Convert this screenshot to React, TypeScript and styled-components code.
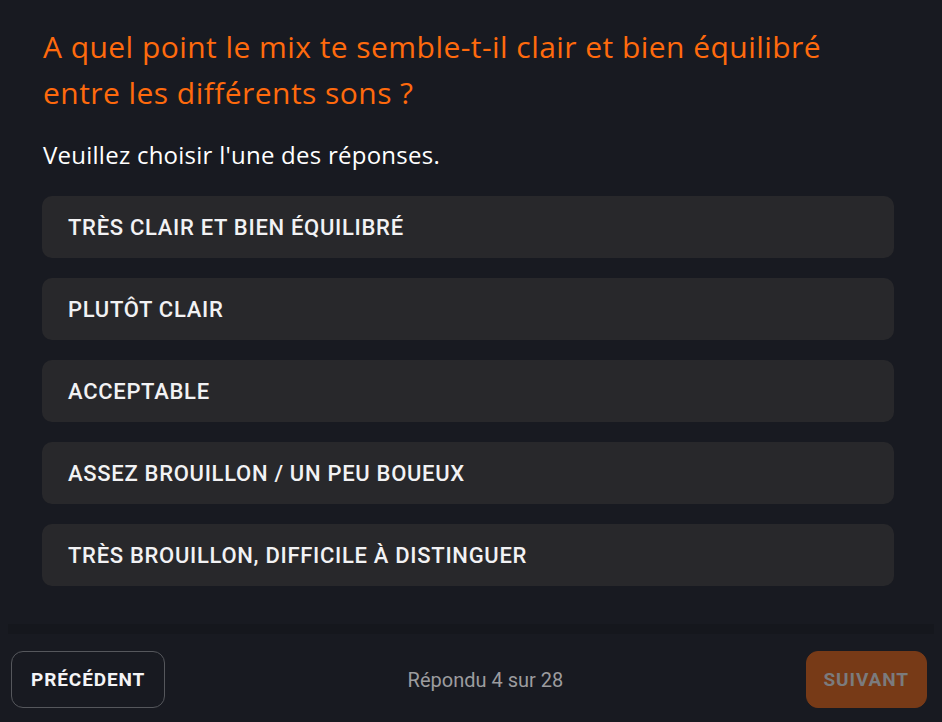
import React from 'react';
import styled, { createGlobalStyle } from 'styled-components';

const GlobalStyle = createGlobalStyle`
  html, body {
    margin: 0;
    padding: 0;
    background: #181a21;
  }
  * {
    box-sizing: border-box;
  }
`;

const Page = styled.div`
  width: 942px;
  height: 722px;
  background: #181a21;
  display: flex;
  flex-direction: column;
`;

const Main = styled.main`
  padding: 24px 48px 0 42px;
  display: flex;
  flex-direction: column;
`;

const Question = styled.h1`
  margin: 0 0 0 1px;
  color: #ff6a0d;
  font-family: 'Open Sans', 'Noto Sans', sans-serif;
  font-weight: 400;
  font-size: 30px;
  letter-spacing: 0.45px;
  line-height: 46px;
`;

const Hint = styled.p`
  margin: 24px 0 26px 1px;
  color: #ffffff;
  font-family: 'Open Sans', 'Noto Sans', sans-serif;
  font-size: 24px;
  letter-spacing: 0.25px;
  line-height: 30px;
`;

const Options = styled.div`
  display: flex;
  flex-direction: column;
  gap: 20px;
`;

const Option = styled.button`
  height: 62px;
  width: 100%;
  border: none;
  border-radius: 10px;
  background: #28282b;
  color: #f2f2f4;
  text-align: left;
  padding: 0 26px;
  font-family: 'Roboto', 'Liberation Sans', sans-serif;
  font-weight: 500;
  font-size: 22px;
  letter-spacing: 0.7px;
  text-transform: uppercase;
  cursor: pointer;
`;

const Divider = styled.div`
  margin: 38px 8px 0 8px;
  height: 10px;
  background: #15171d;
`;

const Footer = styled.footer`
  display: flex;
  align-items: center;
  justify-content: space-between;
  padding: 17px 15px 0 11px;
`;

const NavButton = styled.button<{ $primary?: boolean }>`
  height: 57px;
  padding: 0 ${(p) => (p.$primary ? '17px' : '19px')};
  border-radius: 12px;
  border: 1px solid ${(p) => (p.$primary ? '#773a17' : '#55575c')};
  background: ${(p) => (p.$primary ? '#773a17' : 'transparent')};
  color: ${(p) => (p.$primary ? '#7b7b7d' : '#f4f4f6')};
  font-family: 'Roboto', 'Liberation Sans', sans-serif;
  font-weight: 700;
  font-size: 19px;
  letter-spacing: 0.9px;
  text-transform: uppercase;
`;

const Progress = styled.span`
  color: #9c9c9f;
  font-family: 'Roboto', 'Liberation Sans', sans-serif;
  font-size: 20px;
`;

const answers = [
  'Très clair et bien équilibré',
  'Plutôt clair',
  'Acceptable',
  'Assez brouillon / un peu boueux',
  'Très brouillon, difficile à distinguer',
];

const App: React.FC = () => {
  return (
    <Page>
      <GlobalStyle />
      <Main>
        <Question>
          A quel point le mix te semble-t-il clair et bien équilibré
          <br />
          entre les différents sons ?
        </Question>
        <Hint>Veuillez choisir l'une des réponses.</Hint>
        <Options>
          {answers.map((a) => (
            <Option key={a}>{a}</Option>
          ))}
        </Options>
      </Main>
      <Divider />
      <Footer>
        <NavButton>Précédent</NavButton>
        <Progress>Répondu 4 sur 28</Progress>
        <NavButton $primary>Suivant</NavButton>
      </Footer>
    </Page>
  );
};

export default App;
